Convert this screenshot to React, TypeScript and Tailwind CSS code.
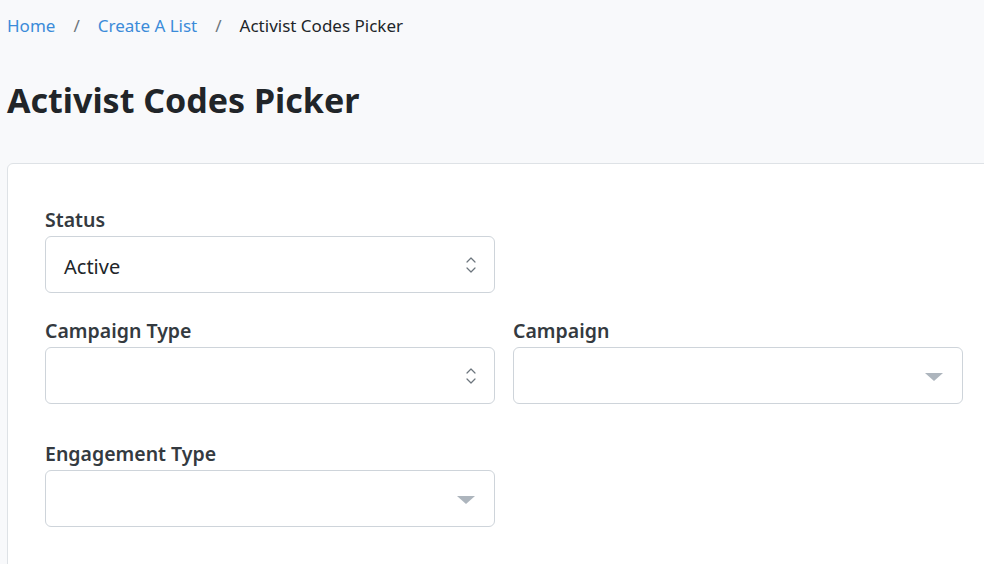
const font = { fontFamily: '"Noto Sans", "Open Sans", sans-serif' };

function UpDownIcon() {
  return (
    <svg width="12" height="20" viewBox="0 0 12 20" fill="none" stroke="#6c757d" strokeWidth="1.2" strokeLinecap="round" strokeLinejoin="round">
      <path d="M2 7 L6 3 L10 7" />
      <path d="M2 13 L6 17 L10 13" />
    </svg>
  );
}

function Caret() {
  return (
    <svg width="18" height="8" viewBox="0 0 18 8">
      <path d="M0 0 L18 0 L9 8 Z" fill="#adb5bd" />
    </svg>
  );
}

function Field({ label, value, icon }: { label: string; value?: string; icon: "updown" | "caret" }) {
  return (
    <div className="flex flex-col">
      <label className="text-[19.5px] leading-[27px] font-semibold text-[#343a40] mb-[3px]">{label}</label>
      <div className="h-[57px] w-[450px] rounded-[6px] border border-[#ced4da] bg-white flex items-center justify-between pl-[18px] pr-[18px]">
        <span className="text-[20px] text-[#212529] mt-[5px]">{value ?? ""}</span>
        <span className={icon === "caret" ? "mr-[1px] mt-[3px]" : "-mr-[1px]"}>
          {icon === "updown" ? <UpDownIcon /> : <Caret />}
        </span>
      </div>
    </div>
  );
}

export default function App() {
  return (
    <div className="w-[984px] h-[564px] overflow-hidden bg-[#f8f9fb]" style={font}>
      <nav className="flex items-center h-[52px] pl-[7px] text-[17px]">
        <a className="text-[#3b8bd9]">Home</a>
        <span className="text-[#6c757d] px-[18px]">/</span>
        <a className="text-[#3b8bd9]">Create A List</a>
        <span className="text-[#6c757d] px-[18px]">/</span>
        <span className="text-[#212529]">Activist Codes Picker</span>
      </nav>
      <h1 className="pl-[7px] mt-[24px] text-[34px] leading-[48px] font-bold text-[#212529]">Activist Codes Picker</h1>
      <div className="ml-[7px] mt-[39px] w-[1000px] h-[420px] bg-white border border-[#dee2e6] rounded-tl-[6px] pl-[37px] pt-[42px]">
        <div className="mb-[24px]">
          <Field label="Status" value="Active" icon="updown" />
        </div>
        <div className="flex gap-[18px] mb-[36px]">
          <Field label="Campaign Type" icon="updown" />
          <Field label="Campaign" icon="caret" />
        </div>
        <Field label="Engagement Type" icon="caret" />
      </div>
    </div>
  );
}
